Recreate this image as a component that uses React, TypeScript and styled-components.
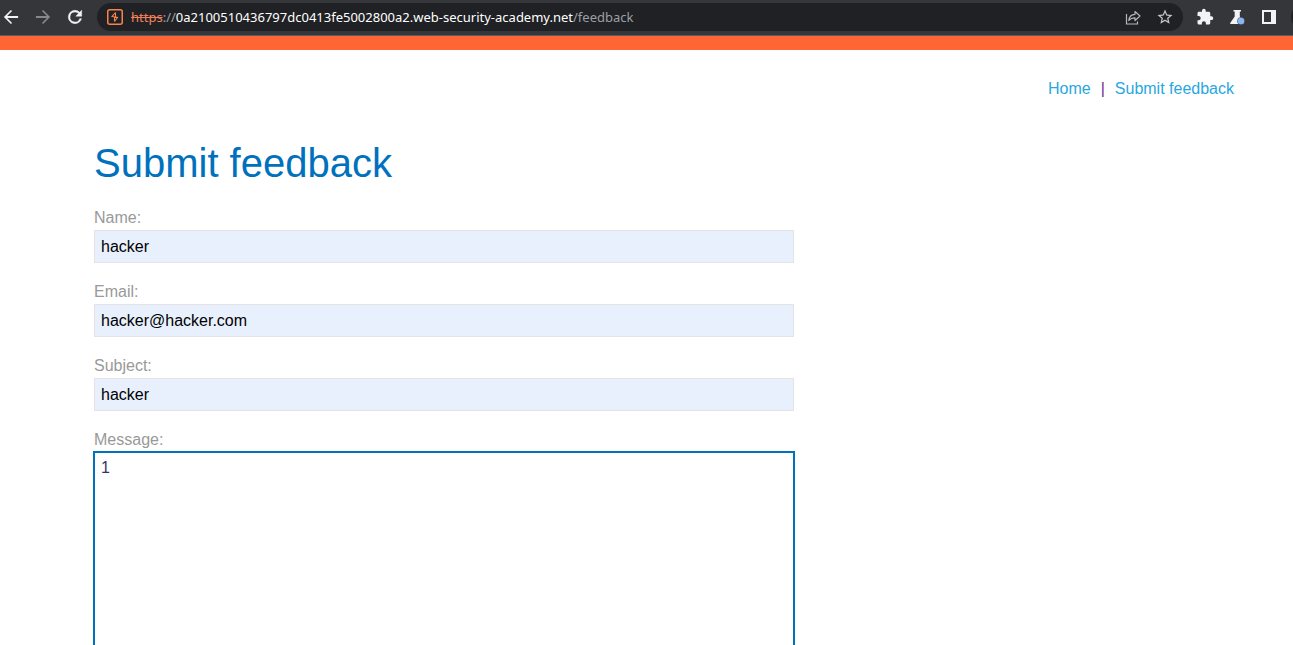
import React from "react";
import styled, { createGlobalStyle } from "styled-components";

const GlobalStyle = createGlobalStyle`
  *, *::before, *::after { box-sizing: border-box; }
  body {
    margin: 0;
    background: #ffffff;
    font-family: "Liberation Sans", Arial, sans-serif;
    font-size: 16px;
  }
`;

const Window = styled.div`
  display: flex;
  flex-direction: column;
  height: 100vh;
  overflow: hidden;
`;

const Toolbar = styled.header`
  display: flex;
  flex: none;
  align-items: center;
  gap: 12px;
  height: 36px;
  padding: 0 0 1px 1px;
  background: #35363a;
  border-bottom: 1px solid #5b5c60;
  overflow: hidden;
`;

const IconButton = styled.button<{ $dim?: boolean }>`
  display: flex;
  flex: none;
  align-items: center;
  justify-content: center;
  width: 20px;
  height: 20px;
  padding: 0;
  border: 0;
  background: none;
  color: ${(p) => (p.$dim ? "#87888b" : "#f1f3f4")};
`;

const AddressBar = styled.div`
  display: flex;
  flex: 1;
  align-items: center;
  gap: 12px;
  min-width: 0;
  height: 28px;
  padding: 0 8px;
  border-radius: 14px;
  background: #202124;
`;

const Address = styled.div`
  flex: 1;
  min-width: 0;
  margin-left: -6px;
  overflow: hidden;
  white-space: nowrap;
  font-family: "Noto Sans", "Open Sans", sans-serif;
  font-size: 13px;
  line-height: 20px;
  color: #9aa0a6;
`;

const Scheme = styled.s`
  color: #f0805a;
`;

const Host = styled.span`
  color: #ffffff;
`;

const Avatar = styled.div`
  flex: none;
  width: 28px;
  height: 28px;
  margin-right: -26px;
  border-radius: 50%;
  background: #202124;
`;

const Viewport = styled.div`
  flex: 1;
  min-height: 0;
  overflow-y: auto;
  scrollbar-width: none;
`;

const Banner = styled.div`
  height: 14px;
  background: #ff6633;
`;

const Page = styled.main`
  padding: 29px 59px 40px 94px;
`;

const Nav = styled.nav`
  display: flex;
  justify-content: flex-end;
  gap: 10px;
  line-height: 20px;
  color: #6b2d90;
`;

const NavLink = styled.a`
  color: #29a7e0;
  text-decoration: none;
`;

const Title = styled.h1`
  margin: 39px 0 20px;
  font-size: 40px;
  font-weight: 400;
  line-height: 50px;
  color: #0071bc;
`;

const Form = styled.form`
  display: flex;
  flex-direction: column;
  gap: 19px;
  max-width: 700px;
`;

const Field = styled.div`
  display: flex;
  flex-direction: column;
  gap: 2px;
`;

const Label = styled.label`
  line-height: 20px;
  color: #999999;
`;

const TextInput = styled.input`
  width: 100%;
  height: 33px;
  padding: 0 6px;
  border: 1px solid #e4e4e4;
  border-radius: 0;
  outline: 0;
  background: #e8f0fe;
  font: inherit;
  color: #000000;
`;

const TextArea = styled.textarea`
  width: 100%;
  height: 300px;
  padding: 6px;
  border: 1px solid #0071bc;
  box-shadow: 0 0 0 1px #0071bc;
  outline: 0;
  resize: none;
  font: inherit;
  line-height: 18px;
  color: #333366;
`;

const BackIcon = () => (
  <svg width="20" height="20" viewBox="0 0 24 24" fill="currentColor" aria-hidden="true">
    <path d="M20.500 10.800H7.400l5.900-5.900L11.900 3.500 3.500 12l8.400 8.500 1.400-1.400-5.900-5.900h13.100z" />
  </svg>
);

const ForwardIcon = () => (
  <svg width="20" height="20" viewBox="0 0 24 24" fill="currentColor" aria-hidden="true">
    <path d="M3.500 10.800h13.100l-5.900-5.900 1.400-1.400 8.400 8.500-8.400 8.500-1.400-1.400 5.900-5.900H3.500z" />
  </svg>
);

const ReloadIcon = () => (
  <svg width="20" height="20" viewBox="0 0 24 24" fill="currentColor" stroke="currentColor" strokeWidth="0.600" aria-hidden="true">
    <path d="M17.650 6.350A7.960 7.960 0 0 0 12 4a8 8 0 1 0 7.730 10h-2.080A6 6 0 1 1 12 6c1.660 0 3.140.69 4.220 1.780L13 11h7V4z" />
  </svg>
);

const SiteIcon = () => (
  <svg width="20" height="20" viewBox="0 0 20 20" fill="none" aria-hidden="true">
    <rect x="2.750" y="2.750" width="14.500" height="14.500" rx="2" stroke="#f7844f" strokeWidth="1.500" />
    <path d="M10.500 5.500 7 9.500l5.500 1-3 4M10.500 5.500v4.500M9.500 10v4.500" stroke="#f7844f" strokeWidth="1.100" />
  </svg>
);

const ShareIcon = () => (
  <svg width="20" height="20" viewBox="0 0 20 20" fill="none" stroke="#b4b7bb" strokeWidth="1.200" aria-hidden="true">
    <path d="M3.500 7v10h11v-2.500" />
    <path d="M5.800 13.500c.4-4 2.700-6 6.200-6.200V4.500l5 4.500-5 4.500v-2.700c-2.700 0-4.700.8-6.200 2.700z" strokeLinejoin="round" />
  </svg>
);

const StarIcon = () => (
  <svg width="18" height="18" viewBox="0 0 24 24" fill="#c6c8cb" aria-hidden="true">
    <path d="m22 9.240-7.190-.62L12 2 9.190 8.630 2 9.240l5.460 4.730L5.820 21 12 17.270 18.180 21l-1.630-7.030zM12 15.400l-3.760 2.270 1-4.280-3.320-2.880 4.380-.38L12 6.100l1.710 4.040 4.380.38-3.320 2.880 1 4.280z" />
  </svg>
);

const PuzzleIcon = () => (
  <svg width="18" height="18" viewBox="0 0 24 24" fill="currentColor" aria-hidden="true">
    <path d="M20.500 11H19V7c0-1.100-.9-2-2-2h-4V3.500a2.500 2.500 0 0 0-5 0V5H4c-1.100 0-1.990.9-1.990 2v3.800H3.500c1.490 0 2.700 1.210 2.700 2.700s-1.210 2.700-2.700 2.700H2V20c0 1.100.9 2 2 2h3.800v-1.500c0-1.490 1.210-2.700 2.700-2.700s2.700 1.210 2.700 2.700V22H17c1.100 0 2-.9 2-2v-4h1.500a2.500 2.500 0 0 0 0-5z" />
  </svg>
);

const FlaskIcon = () => (
  <svg width="20" height="20" viewBox="0 0 20 20" aria-hidden="true">
    <path d="M6.500 3h7.500v1.600h-1.200v4.900l4.200 6.500a.7.7 0 0 1-.6 1H3.800a.7.700 0 0 1-.6-1l4.500-6.500V4.600H6.500z" fill="#f1f3f4" />
    <circle cx="14" cy="14" r="3.800" fill="#55585e" />
    <circle cx="14" cy="14" r="3.200" fill="#8ab4f8" />
  </svg>
);

const SidePanelIcon = () => (
  <svg width="20" height="20" viewBox="0 0 20 20" aria-hidden="true">
    <path d="M3 3h14v14H3zM5 5v10h7V5z" fill="#f1f3f4" fillRule="evenodd" />
  </svg>
);

const fields = [
  { id: "name", label: "Name:", type: "text", value: "hacker" },
  { id: "email", label: "Email:", type: "email", value: "hacker@hacker.com" },
  { id: "subject", label: "Subject:", type: "text", value: "hacker" },
];

export default function App() {
  return (
    <>
      <GlobalStyle />
      <Window>
        <Toolbar>
          <IconButton aria-label="Back"><BackIcon /></IconButton>
          <IconButton aria-label="Forward" $dim><ForwardIcon /></IconButton>
          <IconButton aria-label="Reload"><ReloadIcon /></IconButton>
          <AddressBar>
            <IconButton aria-label="Site information"><SiteIcon /></IconButton>
            <Address>
              <Scheme>https</Scheme>://<Host>0a2100510436797dc0413fe5002800a2.web-security-academy.net</Host>/feedback
            </Address>
            <IconButton aria-label="Share"><ShareIcon /></IconButton>
            <IconButton aria-label="Bookmark"><StarIcon /></IconButton>
          </AddressBar>
          <IconButton aria-label="Extensions"><PuzzleIcon /></IconButton>
          <IconButton aria-label="Labs"><FlaskIcon /></IconButton>
          <IconButton aria-label="Side panel"><SidePanelIcon /></IconButton>
          <Avatar />
        </Toolbar>
        <Viewport>
          <Banner />
          <Page>
            <Nav>
              <NavLink href="#home">Home</NavLink>
              <span>|</span>
              <NavLink href="#feedback">Submit feedback</NavLink>
            </Nav>
            <Title>Submit feedback</Title>
            <Form>
              {fields.map((f) => (
                <Field key={f.id}>
                  <Label htmlFor={f.id}>{f.label}</Label>
                  <TextInput id={f.id} type={f.type} defaultValue={f.value} />
                </Field>
              ))}
              <Field>
                <Label htmlFor="message">Message:</Label>
                <TextArea id="message" defaultValue="1" />
              </Field>
            </Form>
          </Page>
        </Viewport>
      </Window>
    </>
  );
}
